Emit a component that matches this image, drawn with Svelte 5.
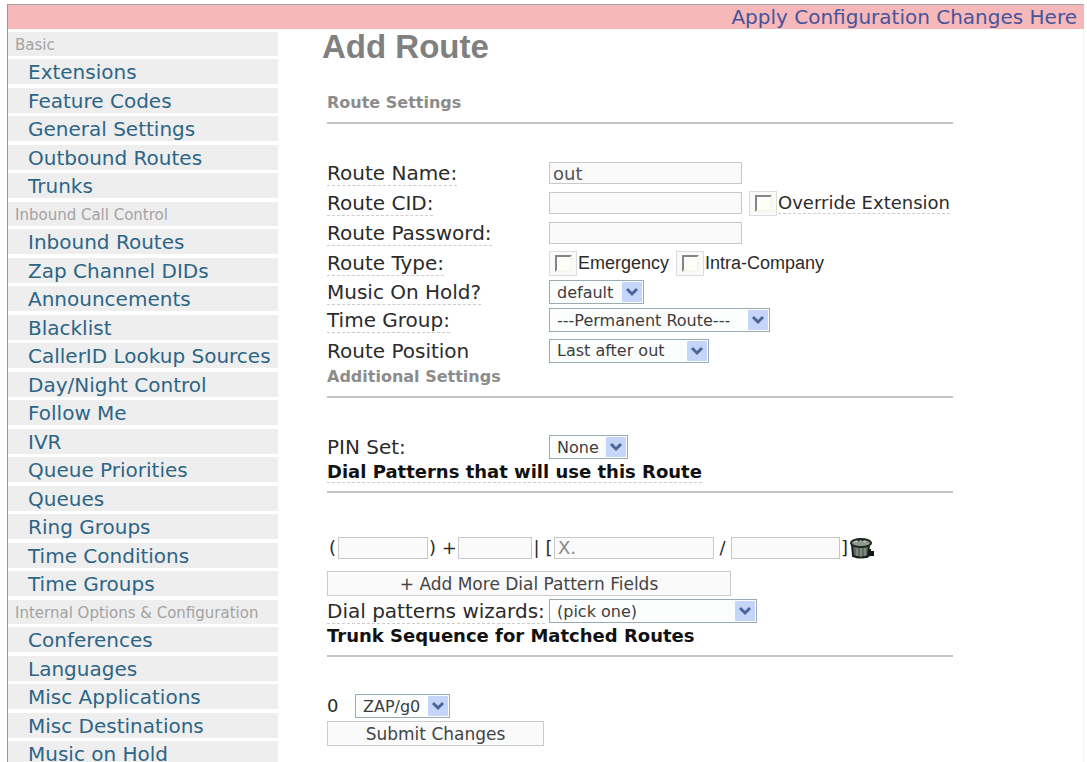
<script lang="ts">
    const menu = [
        {
            title: "Basic",
            items: [
                "Extensions",
                "Feature Codes",
                "General Settings",
                "Outbound Routes",
                "Trunks",
            ],
        },
        {
            title: "Inbound Call Control",
            items: [
                "Inbound Routes",
                "Zap Channel DIDs",
                "Announcements",
                "Blacklist",
                "CallerID Lookup Sources",
                "Day/Night Control",
                "Follow Me",
                "IVR",
                "Queue Priorities",
                "Queues",
                "Ring Groups",
                "Time Conditions",
                "Time Groups",
            ],
        },
        {
            title: "Internal Options & Configuration",
            items: [
                "Conferences",
                "Languages",
                "Misc Applications",
                "Misc Destinations",
                "Music on Hold",
            ],
        },
    ];

    let routeName = $state("out");
    let routeCid = $state("");
    let routePassword = $state("");
    let overrideExtension = $state(false);
    let emergency = $state(false);
    let intraCompany = $state(false);

    let pattern = $state({ prepend: "", prefix: "", match: "X.", cid: "" });

    function clearPattern() {
        pattern = { prepend: "", prefix: "", match: "", cid: "" };
    }
</script>

{#snippet dropdown(id: string, value: string, size: string)}
    <span class="dropdown {size}">
        <select {id}>
            <option>{value}</option>
        </select>
        <svg viewBox="0 0 20 20" aria-hidden="true">
            <rect width="20" height="20" rx="1" fill="#c5d5fa" />
            <path d="M5 7l5 5 5-5" fill="none" stroke="#4c6498" stroke-width="3" />
        </svg>
    </span>
{/snippet}

<div class="page">
    <div class="banner"><a href="#apply">Apply Configuration Changes Here</a></div>

    <div class="columns">
        <nav>
            {#each menu as group}
                <h4>{group.title}</h4>
                <ul>
                    {#each group.items as item}
                        <li><a href="#menu">{item}</a></li>
                    {/each}
                </ul>
            {/each}
        </nav>

        <main>
            <h2>Add Route</h2>

            <form onsubmit={(e) => e.preventDefault()}>
                <h3 class="muted">Route Settings</h3>

                <div class="row">
                    <div class="name"><label class="hint" for="route-name">Route Name:</label></div>
                    <input type="text" class="wide" id="route-name" bind:value={routeName} />
                </div>
                <div class="row">
                    <div class="name"><label class="hint" for="route-cid">Route CID:</label></div>
                    <input type="text" class="wide" id="route-cid" bind:value={routeCid} />
                    <label class="check">
                        <input type="checkbox" bind:checked={overrideExtension} />
                        <span class="hint">Override Extension</span>
                    </label>
                </div>
                <div class="row">
                    <div class="name"><label class="hint" for="route-pass">Route Password:</label></div>
                    <input type="text" class="wide" id="route-pass" bind:value={routePassword} />
                </div>
                <div class="row">
                    <div class="name"><span class="hint">Route Type:</span></div>
                    <label class="check plain">
                        <input type="checkbox" bind:checked={emergency} />
                        <span>Emergency</span>
                    </label>
                    <label class="check plain">
                        <input type="checkbox" bind:checked={intraCompany} />
                        <span>Intra-Company</span>
                    </label>
                </div>
                <div class="row tight">
                    <div class="name"><label class="hint" for="moh">Music On Hold?</label></div>
                    {@render dropdown("moh", "default", "small")}
                </div>
                <div class="row tight">
                    <div class="name"><label class="hint" for="time-group">Time Group:</label></div>
                    {@render dropdown("time-group", "---Permanent Route---", "large")}
                </div>
                <div class="row loose">
                    <div class="name"><label for="position">Route Position</label></div>
                    {@render dropdown("position", "Last after out", "medium")}
                </div>

                <h3 class="muted">Additional Settings</h3>

                <div class="row">
                    <div class="name"><label for="pin-set">PIN Set:</label></div>
                    {@render dropdown("pin-set", "None", "tiny")}
                </div>

                <h3><span class="hint">Dial Patterns that will use this Route</span></h3>

                <div class="pattern">
                    <span>(</span>
                    <input type="text" aria-label="prepend" bind:value={pattern.prepend} />
                    <span>) +</span>
                    <input type="text" aria-label="prefix" bind:value={pattern.prefix} />
                    <span>| [</span>
                    <input type="text" class="faded" aria-label="match pattern" bind:value={pattern.match} />
                    <span>/</span>
                    <input type="text" aria-label="CallerID" bind:value={pattern.cid} />
                    <span>]</span>
                    <button type="button" class="trash" aria-label="Delete pattern" onclick={clearPattern}>
                        <svg viewBox="0 0 26 22">
                            <path d="M17 12h5v2h3v5h-4l-3 2h-5z" fill="#151515" />
                            <path d="M3 7h17l-1 12q-7 3-15 0z" fill="#5f6b60" stroke="#1b1f1b" stroke-width="2" />
                            <path d="M8 10v9M12 10v10M16 10v9" stroke="#98a898" stroke-width="1" />
                            <ellipse cx="12" cy="6" rx="10" ry="4" fill="#8d9a8c" stroke="#222722" stroke-width="2" />
                            <path d="M5 5q6-3 12 0" fill="none" stroke="#c9d2c8" />
                            <path d="M9 4q3-4 5 0" fill="none" stroke="#222722" stroke-width="2" />
                        </svg>
                    </button>
                </div>

                <button type="button" class="add">+ Add More Dial Pattern Fields</button>

                <div class="row">
                    <div class="name"><label class="hint" for="wizard">Dial patterns wizards:</label></div>
                    {@render dropdown("wizard", "(pick one)", "large short")}
                </div>

                <h3>Trunk Sequence for Matched Routes</h3>

                <div class="row">
                    <label class="order" for="trunk">0</label>
                    {@render dropdown("trunk", "ZAP/g0", "small")}
                </div>

                <button type="submit" class="submit">Submit Changes</button>
            </form>
        </main>
    </div>
</div>

<style>
    :global(body) {
        background: #fff;
        font-family: "DejaVu Sans", Verdana, sans-serif;
        color: #2b2b2b;
    }

    .page {
        box-sizing: border-box;
        height: 100vh;
        overflow: hidden;
        margin: 0 3px 0 7px;
        padding-top: 4px;
    }

    .banner {
        height: 24px;
        border-top: 1px solid #a9a2a6;
        border-left: 1px solid #9a9a9a;
        background: #f7b8ba;
        padding-right: 7px;
        text-align: right;
        font-size: 20px;
        line-height: 24px;
    }

    .banner a {
        color: #45559b;
        text-decoration: none;
    }

    .columns {
        display: flex;
        border-left: 1px solid #9a9a9a;
        border-right: 1px solid #f3f3f3;
    }

    nav {
        flex: none;
        width: 270px;
        padding-top: 3px;
    }

    h4 {
        height: 24px;
        margin: 0 0 3px;
        padding-left: 7px;
        background: #eee;
        color: #a3a3a3;
        font-size: 15px;
        font-weight: normal;
        line-height: 27px;
        white-space: nowrap;
    }

    ul {
        list-style: none;
        margin: 0;
        padding: 0;
    }

    li {
        height: 25px;
        margin-bottom: 3px;
        padding-left: 20px;
        background: #eee;
        font-size: 20px;
        line-height: 27px;
        white-space: nowrap;
    }

    li:nth-child(odd) {
        margin-bottom: 4px;
    }

    li a {
        color: #2d6587;
        text-decoration: none;
    }

    main {
        flex: 1;
        padding-left: 44px;
    }

    h2 {
        margin: 0 0 29px;
        padding-top: 1px;
        color: #808080;
        font-family: "Liberation Sans", Arial, sans-serif;
        font-size: 33px;
        line-height: 34px;
    }

    form {
        max-width: 626px;
        margin-left: 5px;
    }

    h3 {
        margin: 0 0 34px;
        padding-bottom: 9px;
        border-bottom: 2px solid #c4c4c0;
        color: #111;
        font-size: 18px;
        line-height: 20px;
    }

    h3.muted {
        color: #8c8c8c;
        font-size: 16px;
    }

    .row {
        display: flex;
        align-items: center;
        gap: 7px;
        height: 30px;
        font-size: 20px;
        line-height: 20px;
        white-space: nowrap;
    }

    .tight {
        height: 28px;
    }

    .loose {
        height: 33px;
    }

    .name {
        flex: none;
        width: 215px;
    }

    .hint {
        border-bottom: 1px dashed #ccc;
    }

    input[type="text"] {
        box-sizing: border-box;
        height: 22px;
        margin: 0;
        padding: 0 3px;
        border: 1px solid #c8c8c8;
        border-radius: 0;
        background: #fafafa;
        color: #555;
        font-family: inherit;
        font-size: 18px;
        min-width: 0;
    }

    input[type="text"].faded {
        color: #8a8a8a;
    }

    input.wide {
        width: 193px;
    }

    .check {
        display: flex;
        align-items: center;
        gap: 1px;
        font-size: 18px;
    }

    .plain {
        font-family: "Liberation Sans", Arial, sans-serif;
    }

    input[type="checkbox"] {
        appearance: none;
        display: grid;
        place-items: center;
        box-sizing: border-box;
        width: 28px;
        height: 25px;
        margin: 0;
        border: 1px solid #dcdcdc;
        background: #fafafa;
    }

    input[type="checkbox"]::before {
        content: "";
        box-sizing: border-box;
        width: 17px;
        height: 17px;
        border: 2px solid #f6f5ee;
        border-top-color: #858585;
        border-left-color: #858585;
        background: #fefdf7;
    }

    input[type="checkbox"]:checked::before {
        background: #4c6498;
    }

    .dropdown {
        position: relative;
        display: inline-flex;
        width: 160px;
    }

    .dropdown.tiny {
        width: 79px;
    }

    .dropdown.small {
        width: 95px;
    }

    .dropdown.large {
        width: 221px;
    }

    .dropdown.short {
        width: 208px;
    }

    select {
        appearance: none;
        width: 100%;
        height: 24px;
        margin: 0;
        padding: 0 0 0 7px;
        border: 1px solid #9aabb5;
        border-radius: 0;
        background: #fcfdfd;
        color: #3d3d3d;
        font-family: inherit;
        font-size: 16px;
    }

    .dropdown svg {
        position: absolute;
        top: 2px;
        right: 2px;
        width: 20px;
        height: 20px;
        pointer-events: none;
    }

    .pattern {
        display: grid;
        grid-template-columns: 11px 90px 30px 74px 22px 160px 17px 109px 9px 26px;
        align-items: center;
        height: 41px;
        margin-bottom: 3px;
        font-size: 18px;
        line-height: 22px;
        text-align: center;
        white-space: nowrap;
    }

    button {
        display: block;
        box-sizing: border-box;
        height: 25px;
        padding: 0;
        border: 1px solid #ccc;
        background: #fafafa;
        color: #444;
        font-family: inherit;
        font-size: 17px;
    }

    .trash {
        height: 22px;
        border: none;
        background: none;
    }

    .trash svg {
        display: block;
        width: 26px;
        height: 22px;
    }

    .add {
        width: 404px;
    }

    .submit {
        width: 217px;
    }

    .order {
        width: 21px;
        font-size: 18px;
    }
</style>
